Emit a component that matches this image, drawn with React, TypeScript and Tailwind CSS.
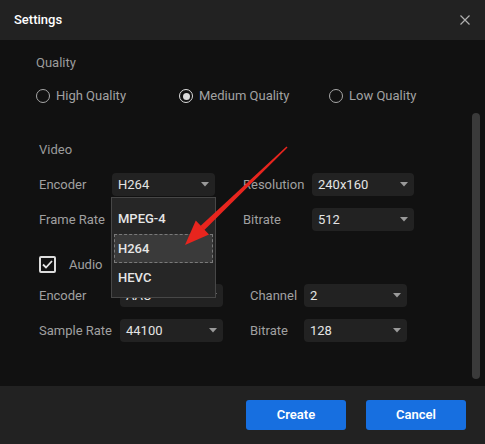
import React from "react";

function Caret() {
  return (
    <svg width="8" height="5" viewBox="0 0 8 5" className="shrink-0">
      <path d="M0 0 L8 0 L4 4.5 Z" fill="#9a9a9a" />
    </svg>
  );
}

function Select({ value, w, ml }: { value: string; w: string; ml?: string }) {
  return (
    <div
      className={`h-[23px] ${w} ${ml ?? ""} rounded-[4px] bg-[#222222] flex items-center justify-between pl-[6px] pr-[6px] text-[13px] text-[#e4e4e4]`}
    >
      <span>{value}</span>
      <Caret />
    </div>
  );
}

function Radio({ label, checked, w }: { label: string; checked?: boolean; w: string }) {
  return (
    <div className={`flex items-center ${w}`}>
      <div
        className={`w-[14px] h-[14px] rounded-full border-[1.5px] ${
          checked ? "border-[#dcdcdc]" : "border-[#a8a8a8]"
        } flex items-center justify-center`}
      >
        {checked && <div className="w-[7px] h-[7px] rounded-full bg-[#dcdcdc]" />}
      </div>
      <span className="ml-[6px] text-[13px] text-[#a2a2a2]">{label}</span>
    </div>
  );
}

export default function App() {
  return (
    <div
      className="w-[485px] h-[444px] bg-[#111111] flex flex-col relative overflow-hidden"
      style={{ fontFamily: "Roboto, 'Liberation Sans', sans-serif" }}
    >
      {/* Header */}
      <div className="h-[40px] bg-[#222222] flex items-center justify-between pl-[14px] pr-[15px] shrink-0">
        <span className="text-[13px] text-white font-medium">Settings</span>
        <svg width="10" height="10" viewBox="0 0 10 10">
          <path d="M0.5 0.5 L9.5 9.5 M9.5 0.5 L0.5 9.5" stroke="#b0b0b0" strokeWidth="1.2" />
        </svg>
      </div>

      {/* Body */}
      <div className="flex-1 relative">
        <div className="pt-[13px]">
          <div className="pl-[36px] h-[20px] flex items-center text-[13px] text-[#9c9c9c]">Quality</div>
          <div className="pl-[36px] mt-[13px] h-[20px] flex items-center">
            <Radio label="High Quality" w="w-[143px]" />
            <Radio label="Medium Quality" checked w="w-[150px]" />
            <Radio label="Low Quality" w="w-[120px]" />
          </div>

          <div className="pl-[39px] mt-[34px] h-[20px] flex items-center text-[13px] text-[#9c9c9c]">Video</div>
          <div className="pl-[39px] mt-[13px] flex items-center">
            <span className="w-[73px] text-[13px] text-[#a0a0a0]">Encoder</span>
            <Select value="H264" w="w-[103px]" />
            <span className="ml-[28px] w-[69px] text-[13px] text-[#a0a0a0]">Resolution</span>
            <Select value="240x160" w="w-[102px]" />
          </div>
          <div className="pl-[39px] mt-[12px] flex items-center">
            <span className="w-[73px] text-[13px] text-[#a0a0a0]">Frame Rate</span>
            <Select value="" w="w-[103px]" />
            <span className="ml-[28px] w-[69px] text-[13px] text-[#a0a0a0]">Bitrate</span>
            <Select value="512" w="w-[102px]" />
          </div>

          <div className="pl-[39px] mt-[25px] flex items-center h-[17px]">
            <div className="w-[17px] h-[17px] rounded-[2px] border-2 border-[#dcdcdc] flex items-center justify-center">
              <svg width="11" height="9" viewBox="0 0 11 9">
                <path d="M1 4.5 L4 7.5 L10 1" stroke="#e6e6e6" strokeWidth="1.8" fill="none" />
              </svg>
            </div>
            <span className="ml-[13px] text-[13px] text-[#a0a0a0]">Audio</span>
          </div>
          <div className="pl-[39px] mt-[11px] flex items-center">
            <span className="w-[81px] text-[13px] text-[#a0a0a0]">Encoder</span>
            <Select value="AAC" w="w-[103px]" />
            <span className="ml-[27px] w-[54px] text-[13px] text-[#a0a0a0]">Channel</span>
            <Select value="2" w="w-[103px]" />
          </div>
          <div className="pl-[39px] mt-[12px] flex items-center">
            <span className="w-[81px] text-[13px] text-[#a0a0a0]">Sample Rate</span>
            <Select value="44100" w="w-[103px]" />
            <span className="ml-[27px] w-[54px] text-[13px] text-[#a0a0a0]">Bitrate</span>
            <Select value="128" w="w-[103px]" />
          </div>
        </div>

        {/* Scrollbar */}
        <div className="absolute left-[472px] top-[73px] w-[8px] h-[266px] rounded-[4px] bg-[#3a3a3a]" />

        {/* Dropdown */}
        <div className="absolute left-[111px] top-[157px] w-[105px] h-[101px] bg-[#262626] border border-[#474747] flex flex-col pt-[6px] px-[2px]">
          <div className="h-[30px] flex items-center pl-[4px] text-[13px] text-[#e6e6e6] font-medium">MPEG-4</div>
          <div className="h-[29px] flex items-center pl-[3px] text-[13px] text-[#e6e6e6] font-medium bg-[#3a3a3a] border border-dashed border-[#7a7a7a]">H264</div>
          <div className="h-[30px] flex items-center pl-[4px] text-[13px] text-[#e6e6e6] font-medium">HEVC</div>
        </div>

        {/* Red arrow */}
        <svg className="absolute left-0 top-[-40px] pointer-events-none" width="485" height="444" viewBox="0 0 485 444">
          <polygon points="287.5,147.5 286.5,146.5 200.4,226.0 204.4,230.0" fill="#e8251e" />
          <polygon points="185,245 195.8,220.6 209,234.4" fill="#e8251e" />
        </svg>
      </div>

      {/* Footer */}
      <div className="h-[58px] bg-[#222222] flex items-start justify-end gap-[20px] pr-[19px] pt-[14px] shrink-0">
        <button className="w-[100px] h-[30px] rounded-[3px] bg-[#176fe0] text-white text-[13px] font-semibold">Create</button>
        <button className="w-[100px] h-[30px] rounded-[3px] bg-[#176fe0] text-white text-[13px] font-semibold">Cancel</button>
      </div>
    </div>
  );
}
